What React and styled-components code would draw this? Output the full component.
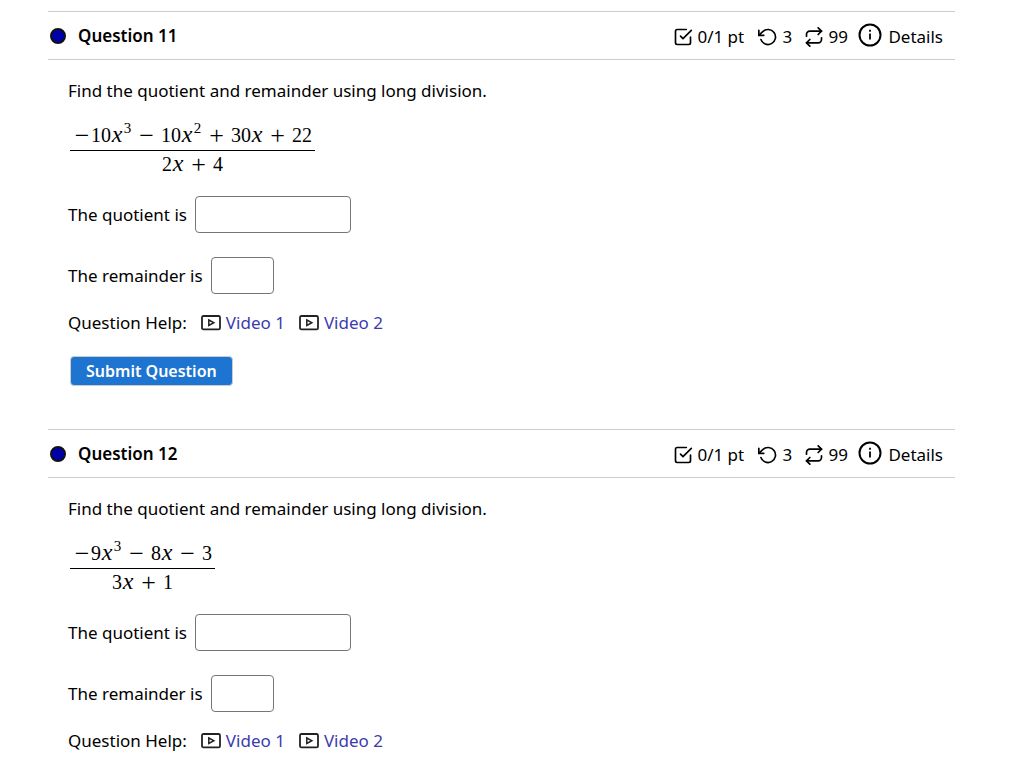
import React from 'react'
import styled, { createGlobalStyle } from 'styled-components';
import { FiCheckSquare, FiRotateCcw, FiRepeat } from 'react-icons/fi';

const questions = [
  {
    number: 11,
    canSubmit: true,
    numerator: [['neg'], ['num', '10'], ['var', 'x', '3'], ['op', '−'], ['num', '10'], ['var', 'x', '2'],
      ['op', '+'], ['num', '30'], ['var', 'x'], ['op', '+'], ['num', '22']],
    denominator: [['num', '2'], ['var', 'x'], ['op', '+'], ['num', '4']],
  },
  {
    number: 12,
    canSubmit: false,
    numerator: [['neg'], ['num', '9'], ['var', 'x', '3'], ['op', '−'], ['num', '8'], ['var', 'x'],
      ['op', '−'], ['num', '3']],
    denominator: [['num', '3'], ['var', 'x'], ['op', '+'], ['num', '1']],
  },
];

const Terms = ({ terms }) => terms.map(([kind, text, power], i) => {
  if (kind === 'neg') return <Operator key={i} $width={18}>−</Operator>;
  if (kind === 'op') return <Operator key={i} $width={29}>{text}</Operator>;
  if (kind === 'var') return (
    <React.Fragment key={i}>
      <Variable>{text}</Variable>
      {power && <Power>{power}</Power>}
    </React.Fragment>
  );
  return <span key={i}>{text}</span>;
});

const InfoIcon = () => (
  <svg width="24" height="24" viewBox="0 0 24 24" fill="none" stroke="#000" aria-hidden="true">
    <circle cx="12" cy="12" r="10.5" strokeWidth="2" />
    <path d="M12 10.5v6" strokeWidth="1.8" />
    <path d="M12 6.8v2" strokeWidth="1.8" />
  </svg>
);

const VideoIcon = () => (
  <svg width="20" height="16" viewBox="0 0 20 16" fill="none" stroke="#222" aria-hidden="true">
    <rect x="1" y="1" width="18" height="13.4" rx="1.5" strokeWidth="1.8" />
    <path d="M7.8 5l5 2.7-5 2.7z" strokeWidth="1.5" />
  </svg>
);

const Question = ({ number, canSubmit, numerator, denominator }) => {
  const id = `question-${number}`;

  return (
    <section aria-labelledby={id}>
      <Header>
        <Dot />
        <Title id={id}>Question {number}</Title>
        <Status>
          <Stat $width={85}><FiCheckSquare size={20} />0/1 pt</Stat>
          <Stat $width={46}><FiRotateCcw size={20} />3</Stat>
          <Stat $width={54}><FiRepeat size={20} />99</Stat>
          <Details type="button"><InfoIcon /><span>Details</span></Details>
        </Status>
      </Header>
      <Body>
        <Prompt>Find the quotient and remainder using long division.</Prompt>
        <Fraction>
          <Numerator><Terms terms={numerator} /></Numerator>
          <Denominator><Terms terms={denominator} /></Denominator>
        </Fraction>
        <Field>
          <label htmlFor={`${id}-quotient`}>The quotient is</label>
          <Answer id={`${id}-quotient`} type="text" $width={156} />
        </Field>
        <Field>
          <label htmlFor={`${id}-remainder`}>The remainder is</label>
          <Answer id={`${id}-remainder`} type="text" $width={63} />
        </Field>
        <Help>
          <span>Question Help:</span>
          <VideoLink href="#video-1"><VideoIcon />Video 1</VideoLink>
          <VideoLink href="#video-2"><VideoIcon />Video 2</VideoLink>
        </Help>
        {canSubmit && <Submit type="button">Submit Question</Submit>}
      </Body>
    </section>
  );
};

const App = () => {
  return (
    <>
      <GlobalStyle />
      <Page>
        {questions.map((question) => <Question key={question.number} {...question} />)}
      </Page>
    </>
  )
}

const GlobalStyle = createGlobalStyle`
  * {
    box-sizing: border-box;
  }
  body {
    margin: 0;
    background-color: white;
    color: black;
    font-family: 'Noto Sans', sans-serif;
    font-size: 17px;
    line-height: 24px;
  }
  button, input {
    font: inherit;
    color: inherit;
  }
`;

const Page = styled.main`
  display: flex;
  flex-direction: column;
  gap: 43px;
  padding: 11px 64px 0 48px;
`;

const Header = styled.header`
  display: flex;
  align-items: center;
  height: 49px;
  padding: 0 12px 0 2px;
  border-top: solid 1px #CCCCCC;
  border-bottom: solid 1px #CCCCCC;
`;

const Dot = styled.span`
  width: 16px;
  height: 16px;
  border: solid 2px #111111;
  border-radius: 50%;
  background-color: #0000AA;
`;

const Title = styled.h2`
  margin: 0 auto 0 12px;
  font-size: 17px;
  font-weight: 600;
`;

const Status = styled.div`
  display: flex;
  align-items: center;
  padding-top: 3px;
`;

const Stat = styled.span`
  display: flex;
  align-items: center;
  gap: 4px;
  width: ${(props) => props.$width}px;
  white-space: nowrap;
`;

const Details = styled.button`
  display: flex;
  gap: 6px;
  padding: 0;
  border: none;
  background: none;
  cursor: pointer;

  svg {
    margin-top: -2px;
  }
`;

const Body = styled.div`
  display: flex;
  flex-direction: column;
  align-items: flex-start;
  padding: 19px 20px 0;
`;

const Prompt = styled.p`
  margin: 0 0 19px;
`;

const Fraction = styled.div`
  display: flex;
  flex-direction: column;
  margin: 0 2px 20px;
  font-family: 'Liberation Serif', serif;
  font-size: 20px;
`;

const Numerator = styled.div`
  display: flex;
  align-items: baseline;
  height: 29px;
  padding: 0 3px;
  border-bottom: solid 1px black;
`;

const Denominator = styled.div`
  display: flex;
  align-items: baseline;
  justify-content: center;
  height: 25px;
`;

const Operator = styled.span`
  align-self: flex-start;
  width: ${(props) => props.$width}px;
  font-size: 26px;
  line-height: 28px;
  text-align: center;
`;

const Variable = styled.i`
  width: 12px;
  font-size: 24px;
  text-align: center;
`;

const Power = styled.sup`
  align-self: flex-start;
  width: 9px;
  font-size: 15px;
  line-height: 12px;
  text-align: center;
`;

const Field = styled.div`
  display: flex;
  align-items: center;
  gap: 8px;
  margin-bottom: 24px;
`;

const Answer = styled.input`
  width: ${(props) => props.$width}px;
  height: 37px;
  padding: 4px 8px;
  border: solid 1px #767676;
  border-radius: 4px;
  background-color: white;
`;

const Help = styled.div`
  display: flex;
  gap: 14px;
  margin: -7px 0 21px;
`;

const VideoLink = styled.a`
  display: flex;
  align-items: center;
  gap: 5px;
  color: #3B3BAE;
  text-decoration: none;
`;

const Submit = styled.button`
  height: 30px;
  margin-left: 2px;
  padding: 0 15px;
  border: solid 1px #CCCCCC;
  border-radius: 4px;
  background-color: #1E74D1;
  color: white;
  font-size: 16px;
  font-weight: 600;
  cursor: pointer;
`;

export default App
